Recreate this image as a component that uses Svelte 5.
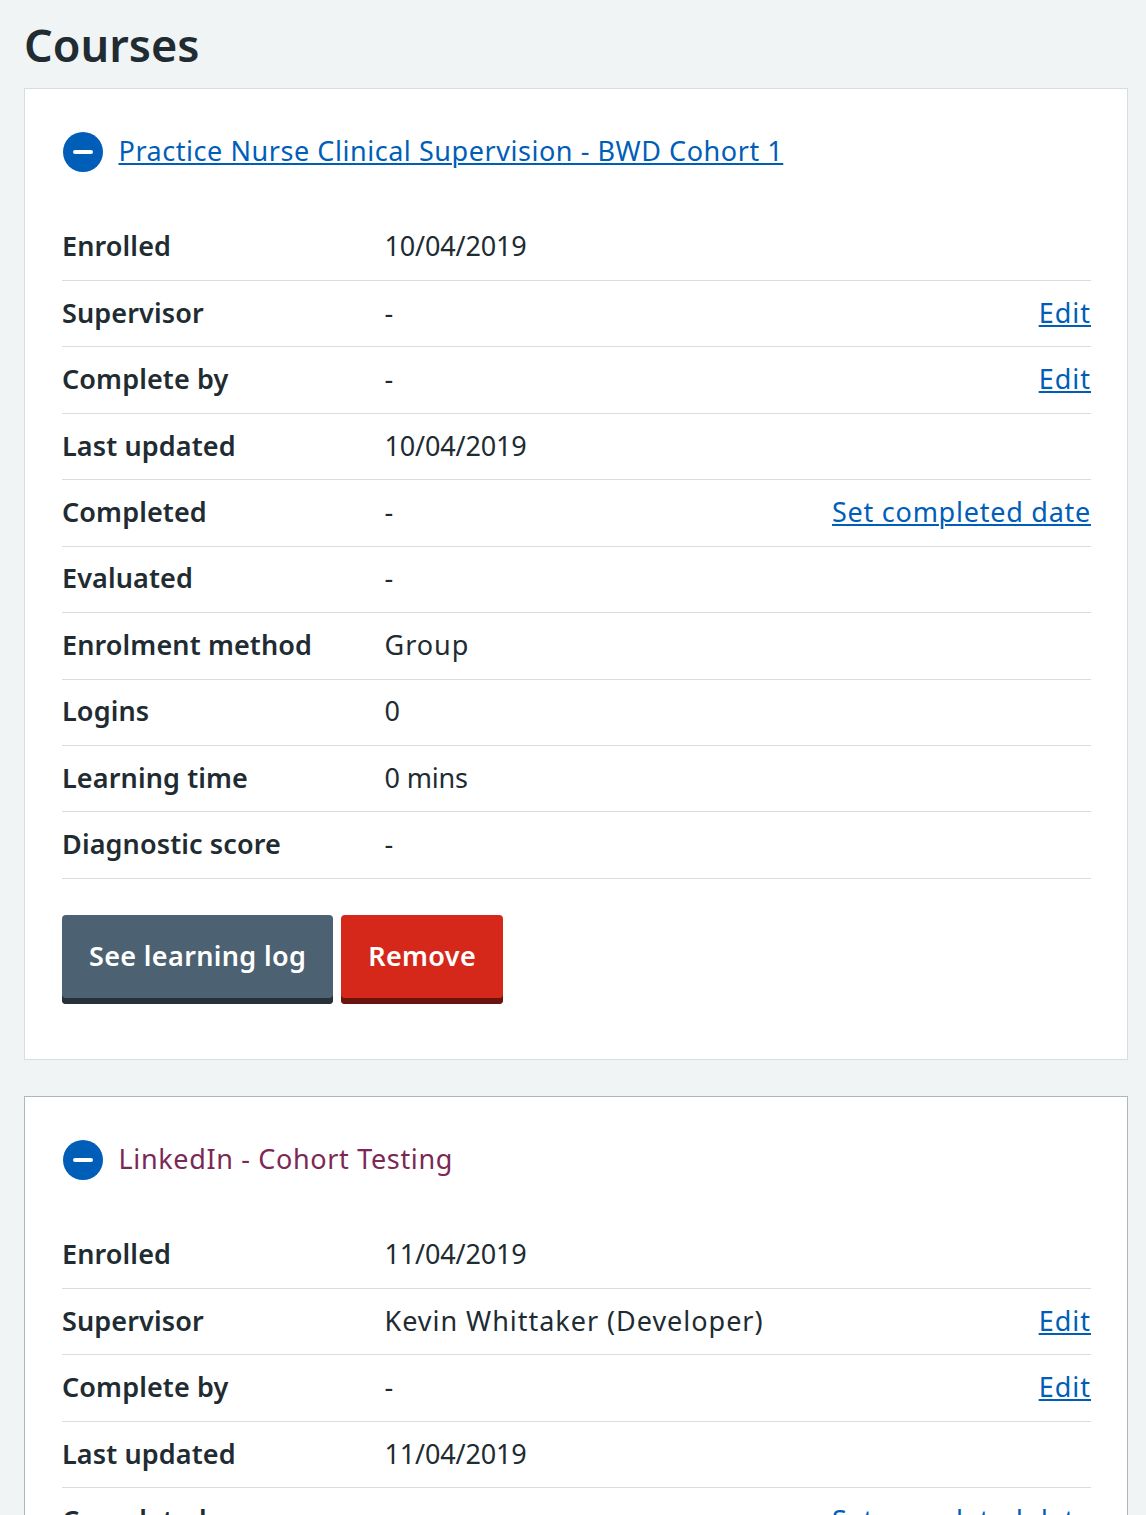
<script>
  const courses = [
    {
      title: 'Practice Nurse Clinical Supervision - BWD Cohort 1',
      visited: false,
      rows: [
        ['Enrolled', '10/04/2019', ''],
        ['Supervisor', '-', 'Edit'],
        ['Complete by', '-', 'Edit'],
        ['Last updated', '10/04/2019', ''],
        ['Completed', '-', 'Set completed date'],
        ['Evaluated', '-', ''],
        ['Enrolment method', 'Group', ''],
        ['Logins', '0', ''],
        ['Learning time', '0 mins', ''],
        ['Diagnostic score', '-', '']
      ]
    },
    {
      title: 'LinkedIn - Cohort Testing',
      visited: true,
      rows: [
        ['Enrolled', '11/04/2019', ''],
        ['Supervisor', 'Kevin Whittaker (Developer)', 'Edit'],
        ['Complete by', '-', 'Edit'],
        ['Last updated', '11/04/2019', ''],
        ['Completed', '-', 'Set completed date'],
        ['Evaluated', '-', ''],
        ['Enrolment method', 'Group', ''],
        ['Logins', '0', ''],
        ['Learning time', '0 mins', ''],
        ['Diagnostic score', '-', '']
      ]
    }
  ];
  const isNumeric = (v) => /^\d/.test(v);
</script>

<div class="page">
  <h1>Courses</h1>
  {#each courses as c}
    <section class="card" class:active={c.visited}>
      <div class="head">
        <svg class="icon" viewBox="0 0 40 40" aria-hidden="true">
          <circle cx="20" cy="20" r="20" fill="#005eb8" />
          <rect x="10" y="18" width="20" height="4" rx="2" fill="#fff" />
        </svg>
        {#if c.visited}
          <a class="title visited" href="#top">{c.title}</a>
        {:else}
          <a class="title" href="#top">{c.title}</a>
        {/if}
      </div>
      <div class="rows">
        {#each c.rows as r}
          <div class="row">
            <div class="label">{r[0]}</div>
            <div class="value" class:num={isNumeric(r[1])}>{r[1]}</div>
            <div class="action">{#if r[2]}<a href="#top" class:short={r[2] === 'Edit'}>{r[2]}</a>{/if}</div>
          </div>
        {/each}
      </div>
      <div class="buttons">
        <button class="btn grey">See learning log</button>
        <button class="btn red">Remove</button>
      </div>
    </section>
  {/each}
</div>

<style>
  :global(body) {
    margin: 0;
    background: #f0f4f5;
  }
  .page {
    height: 1515px;
    overflow: hidden;
    padding: 0 18px 0 24px;
    font-family: "Noto Sans", "Open Sans", sans-serif;
    font-size: 27px;
    color: #212b32;
  }
  h1 {
    margin: 0;
    height: 88px;
    display: flex;
    align-items: center;
    font-size: 45px;
    font-weight: 600;
    line-height: 1;
    box-sizing: border-box;
  }
  .card {
    background: #fff;
    border: 1px solid #d8dde0;
    box-sizing: border-box;
    height: 972px;
    margin-bottom: 36px;
    padding: 43px 36px 0 37px;
  }
  .card.active {
    border-color: #aeb7bd;
  }
  .head {
    display: flex;
    align-items: center;
    gap: 15.5px;
    height: 40px;
    padding-left: 1px;
    margin-bottom: 42.5px;
    line-height: 36px;
  }
  .icon {
    width: 40px;
    height: 40px;
    flex: none;
  }
  .title {
    position: relative;
    top: -1px;
    letter-spacing: 0.55px;
  }
  a {
    color: #005eb8;
    text-decoration: underline;
    text-decoration-thickness: 2px;
    text-underline-offset: 2px;
  }
  .title.visited {
    color: #7c2855;
    text-decoration: none;
    letter-spacing: 0.65px;
  }
  .row {
    display: grid;
    grid-template-columns: 322.5px 1fr auto;
    align-items: center;
    height: 66.45px;
    padding-bottom: 3px;
    box-sizing: border-box;
    border-bottom: 1px solid #d8dde0;
    line-height: 1;
  }
  .label {
    font-weight: 600;
    letter-spacing: 0.12px;
  }
  .value {
    letter-spacing: 0.97px;
  }
  .value.num {
    letter-spacing: -0.15px;
  }
  .action a {
    letter-spacing: 0.75px;
  }
  .action a.short {
    letter-spacing: 1px;
  }
  .buttons {
    display: flex;
    gap: 8px;
    margin-top: 36px;
  }
  .btn {
    height: 89px;
    padding: 0 27px 7px;
    border: 0;
    border-radius: 4px;
    font: 600 27px "Noto Sans", "Open Sans", sans-serif;
    letter-spacing: 0.35px;
    color: #fff;
  }
  .grey {
    background: #4c6272;
    box-shadow: inset 0 -6px 0 #263139;
  }
  .red {
    background: #d5281b;
    box-shadow: inset 0 -6px 0 #6b140e;
  }
</style>
